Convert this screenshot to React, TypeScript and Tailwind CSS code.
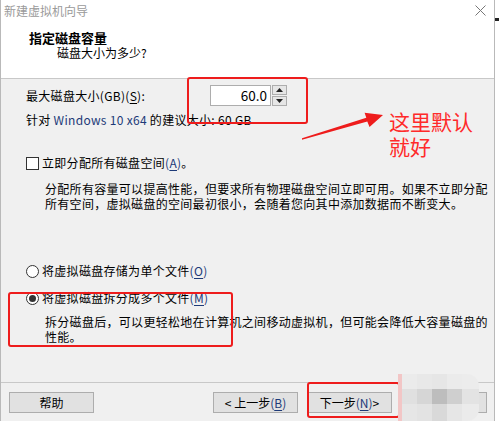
import React from 'react'

const Key = ({ k }: { k: string }) => (
  <span className="text-[#1d3a78]">
    (<span className="underline underline-offset-2">{k}</span>)
  </span>
)

const Btn = ({ children, className = '' }: { children: React.ReactNode; className?: string }) => (
  <div
    className={`w-[85px] h-[21px] flex items-center justify-center bg-[#e1e1e1] border border-[#adadad] text-[12px] leading-[16px] text-black ${className}`}
  >
    {children}
  </div>
)

const Radio = ({ checked }: { checked?: boolean }) => (
  <div className="w-[13px] h-[13px] rounded-full border border-[#333] bg-white flex items-center justify-center shrink-0">
    {checked && <div className="w-[7px] h-[7px] rounded-full bg-[#333]" />}
  </div>
)

const App = () => {
  const blocks = [
    ['#ebebeb', '#e8e8e8', '#e6e6e6', '#ebebeb', '#ececec'],
    ['#e0e0e0', '#d6d6d6', '#bdbdbd', '#cfcfcf', '#e3e3e3'],
    ['#e6e6e6', '#e3e3e3', '#d9d9d9', '#e6e6e6', '#ebebeb'],
  ]

  return (
    <div className="relative w-[499px] h-[421px] bg-white flex overflow-hidden font-['Noto_Sans_CJK_SC','Noto_Sans',sans-serif] text-black">
      {/* window */}
      <div className="w-[495px] h-full flex flex-col border-l border-r border-[#b9b9b9] shrink-0">
        {/* title bar */}
        <div className="h-[21px] bg-white flex items-center justify-between pl-[3px] pr-[8px]">
          <span className="text-[12px] leading-[16px] text-[#9a9a9a]">新建虚拟机向导</span>
          <svg width="11" height="11" viewBox="0 0 11 11" className="text-[#777]">
            <path d="M0.5 0.5 L10.5 10.5 M10.5 0.5 L0.5 10.5" stroke="currentColor" strokeWidth="1" />
          </svg>
        </div>

        {/* header */}
        <div className="h-[58px] bg-white border-b border-[#c8c8c8] pl-[28px] pt-[9px]">
          <div className="text-[13px] leading-[15px] font-bold">指定磁盘容量</div>
          <div className="pl-[28px] text-[12px] leading-[16px]">磁盘大小为多少?</div>
        </div>

        {/* body */}
        <div className="flex-1 bg-[#f0f0f0] pl-[25px] pt-[6px] text-[12px] tracking-[0.3px]">
          <div className="flex items-center h-[21px]">
            <span className="w-[184px] leading-[16px]">
              最大磁盘大小(GB)(<span className="underline underline-offset-2">S</span>):
            </span>
            <div className="w-[61px] h-[21px] bg-white border border-[#adadad] flex items-center justify-end pr-[3px] text-[13.5px] tracking-normal">
              60.0
            </div>
            <div className="flex flex-col w-[15px] h-[21px] gap-[1px] ml-[1px]">
              <div className="flex-1 bg-[#e6e6e6] border border-[#adadad] flex items-center justify-center">
                <svg width="7" height="4" viewBox="0 0 7 4"><path d="M3.5 0 L7 4 L0 4 Z" fill="#222" /></svg>
              </div>
              <div className="flex-1 bg-[#e6e6e6] border border-[#adadad] flex items-center justify-center">
                <svg width="7" height="4" viewBox="0 0 7 4"><path d="M0 0 L7 0 L3.5 4 Z" fill="#222" /></svg>
              </div>
            </div>
          </div>

          <div className="mt-[6px] leading-[16px]">
            针对 <span className="text-[#1d3a78]">Windows 10 x64</span> 的建议大小: 60 GB
          </div>

          <div className="mt-[27px] flex items-center gap-[3px] h-[16px]">
            <div className="w-[13px] h-[13px] border border-[#333] bg-white shrink-0" />
            <span className="leading-[16px]">
              立即分配所有磁盘空间<Key k="A" />。
            </span>
          </div>

          <div className="mt-[10px] pl-[19px] leading-[15px]">
            分配所有容量可以提高性能，但要求所有物理磁盘空间立即可用。如果不立即分配
            <br />
            所有空间，虚拟磁盘的空间最初很小，会随着您向其中添加数据而不断变大。
          </div>

          <div className="mt-[52px] flex items-center gap-[3px] h-[16px]">
            <Radio />
            <span className="leading-[16px]">
              将虚拟磁盘存储为单个文件<Key k="O" />
            </span>
          </div>

          <div className="mt-[11px] flex items-center gap-[3px] h-[16px]">
            <Radio checked />
            <span className="leading-[16px]">
              将虚拟磁盘拆分成多个文件<Key k="M" />
            </span>
          </div>

          <div className="mt-[8px] pl-[19px] leading-[15px]">
            拆分磁盘后，可以更轻松地在计算机之间移动虚拟机，但可能会降低大容量磁盘的
            <br />
            性能。
          </div>
        </div>

        {/* footer */}
        <div className="h-[39px] bg-[#f0f0f0] border-t border-[#c8c8c8] flex items-start pt-[9px] pl-[8px]">
          <Btn>帮助</Btn>
          <Btn className="ml-[119px]">
            &lt; 上一步<span className="text-[#1d3a78]">(<span className="underline underline-offset-2">B</span>)</span>
          </Btn>
          <Btn className="ml-[9px]">
            下一步<span className="text-[#1d3a78]">(<span className="underline underline-offset-2">N</span>)</span> &gt;
          </Btn>
          <Btn className="ml-[10px]">取消</Btn>
        </div>
      </div>

      {/* outside strip */}
      <div className="flex-1 bg-white relative">
        <div className="absolute left-0 top-[18px] w-[4px] h-[3px] bg-[#222]" />
      </div>

      {/* annotations */}
      <div className="absolute left-[187px] top-[77px] w-[121px] h-[47px] border-2 border-[#ee1c1c] rounded-[3px]" />
      <div className="absolute left-[8px] top-[292px] w-[225px] h-[55px] border-2 border-[#ee1c1c] rounded-[3px]" />
      <div className="absolute left-[307px] top-[382px] w-[93px] h-[36px] border-2 border-[#ee1c1c] rounded-[3px]" />

      <svg className="absolute left-0 top-0" width="499" height="421" viewBox="0 0 499 421">
        <path
          d="M302 139.8 L367.3 121.6 L369.5 127 L383 115 L364.6 112.7 L366.3 117.8 L302 138.2 Z"
          fill="#ee1c1c"
        />
      </svg>

      <div className="absolute left-[389px] top-[109px] text-[21px] leading-[25px] text-[#ff2a2a]">
        这里默认
        <br />
        就好
      </div>

      {/* watermark */}
      <div className="absolute left-[398px] top-[374px] flex">
        <div className="w-[4px] h-[47px] bg-[#f2c6c6]" />
        <div className="flex flex-col">
          {blocks.map((row, r) => (
            <div key={r} className="flex">
              {row.map((c, i) => (
                <div
                  key={i}
                  className={`h-[15px] ${i === 4 ? 'w-[17px]' : 'w-[15px]'} ${r === 2 ? 'h-[17px]' : ''} ${
                    i === 4 && r === 0 ? 'rounded-tr-[12px]' : ''
                  } ${i === 4 && r === 2 ? 'rounded-br-[12px]' : ''}`}
                  style={{ backgroundColor: c }}
                />
              ))}
            </div>
          ))}
        </div>
      </div>
    </div>
  )
}

export default App
